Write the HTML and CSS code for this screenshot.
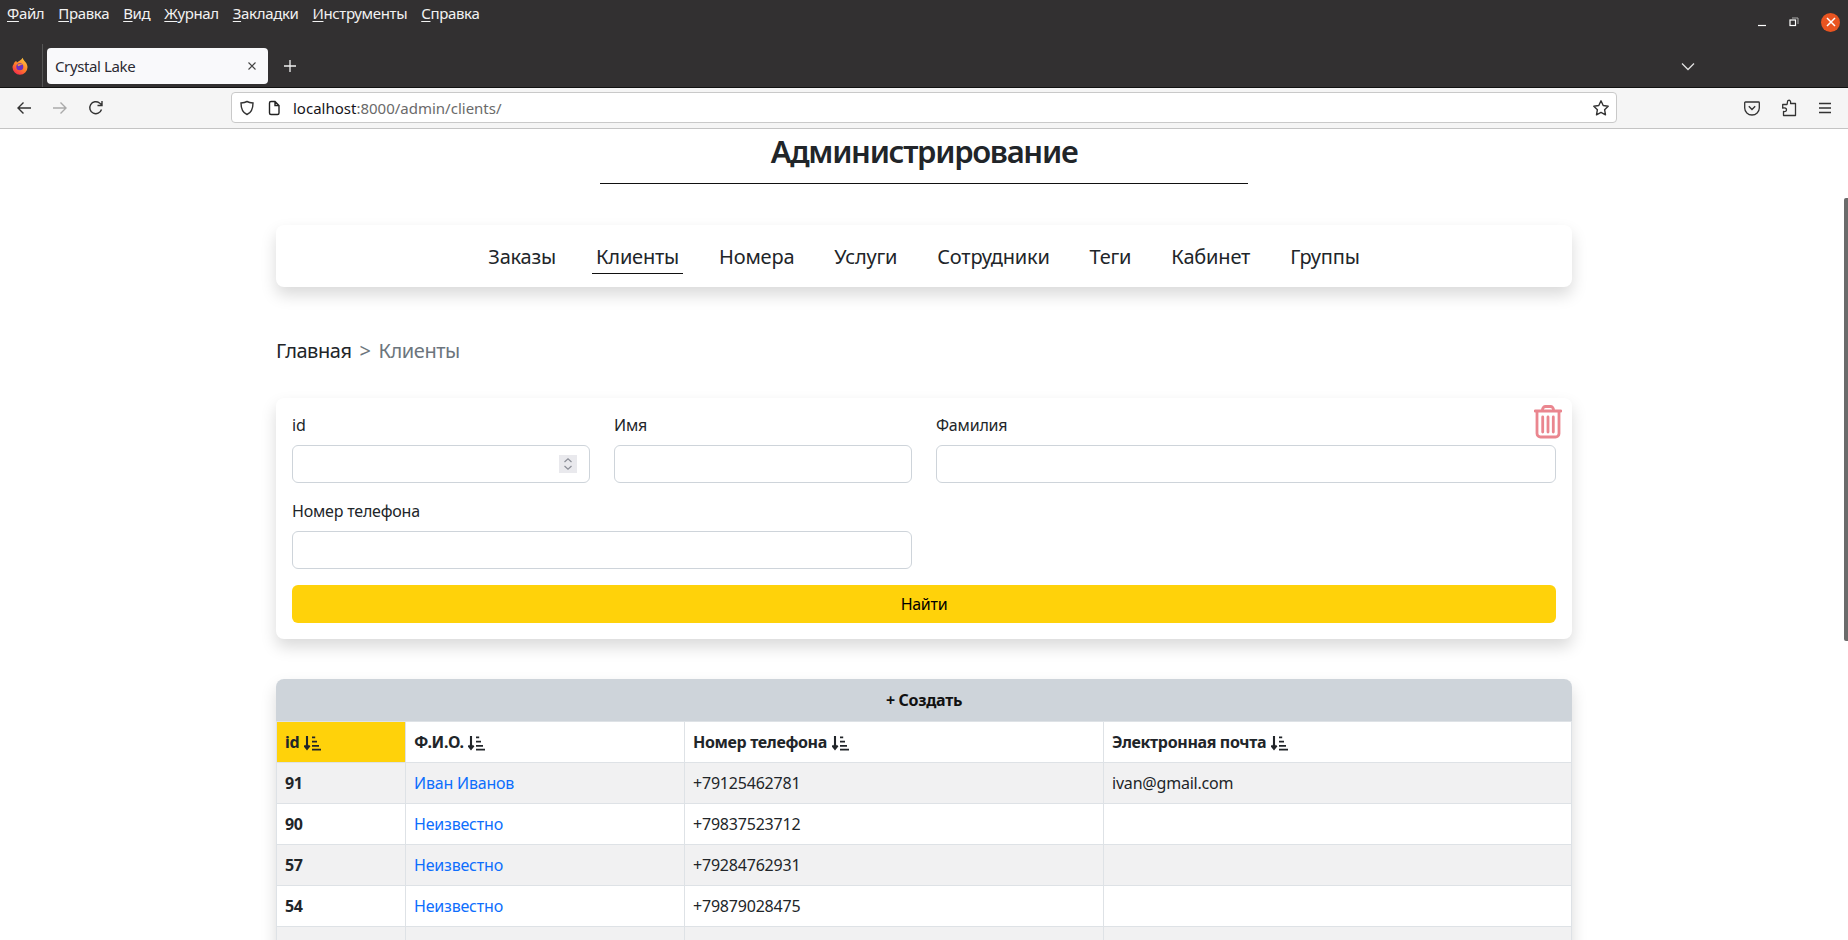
FILE: index.html
```html
<!DOCTYPE html>
<html lang="ru">
<head>
<meta charset="utf-8">
<title>Crystal Lake</title>
<link rel="stylesheet" href="styles.css">
</head>
<body>
<svg class="sprite" width="0" height="0" aria-hidden="true">
  <defs>
    <linearGradient id="fxg" x1="0.8" y1="0" x2="0.2" y2="1">
      <stop offset="0" stop-color="#ffc83d"/>
      <stop offset="0.55" stop-color="#ff7a2a"/>
      <stop offset="1" stop-color="#f5224f"/>
    </linearGradient>
  </defs>
  <symbol id="sort" viewBox="0 0 17 16">
    <path d="M3 1v12.500M.4 10.500 3 13.800l2.600-3.300" fill="none" stroke="currentColor" stroke-width="2.100"/>
    <path d="M8 1.500h3.200v1.800H8zM8 5.700h5v1.800H8zM8 9.900h7v1.800H8zM8 13.800h9v1.800H8z" fill="currentColor"/>
  </symbol>
</svg>
<header class="browser">
  <div class="titlebar">
    <nav class="menubar">
      <span><u>Ф</u>айл</span><span><u>П</u>равка</span><span><u>В</u>ид</span><span><u>Ж</u>урнал</span><span><u>З</u>акладки</span><span><u>И</u>нструменты</span><span><u>С</u>правка</span>
    </nav>
    <div class="winbtns">
      <svg width="10" height="10" viewBox="0 0 10 10"><path d="M1 8.500h8" stroke="#fff" stroke-width="1.200"/></svg>
      <svg width="10" height="10" viewBox="0 0 10 10"><path d="M3 1h6v6" fill="none" stroke="#aaa"/><rect x="1" y="3" width="5.500" height="5.500" fill="none" stroke="#fff" stroke-width="1.200"/></svg>
      <span class="closebtn"><svg width="10" height="10" viewBox="0 0 10 10"><path d="M1 1l8 8M9 1l-8 8" stroke="#fff" stroke-width="1.500"/></svg></span>
    </div>
  </div>
  <div class="tabbar">
    <svg class="fxlogo" width="16" height="18" viewBox="0 0 16 18">
      <path d="M1.500 7.500C2 5.500 3 4.500 4.200 4l.8 1.500C6.500 4.500 9.500 3 10.800.8c.2 1.700 1.400 2.800 2.600 4.200 1.500 1.800 2.100 3.800 2.100 5.200a7.500 7.500 0 0 1-15 0c0-1 .3-1.800 1-2.700z" fill="url(#fxg)"/>
      <circle cx="7.800" cy="9.800" r="3.500" fill="#6a2fc0"/>
      <path d="M5.500 7.500c1.800-1 4-.8 5.300.6-1-.2-3 0-3.700 1-.8.200-1.500-.6-1.600-1.600z" fill="#ff9a2e"/>
    </svg>
    <span class="tabsep"></span>
    <div class="tab">
      <span class="tabtitle">Crystal Lake</span>
      <svg width="10" height="10" viewBox="0 0 10 10"><path d="M1.500 1.500l7 7M8.500 1.500l-7 7" stroke="#444" stroke-width="1.100"/></svg>
    </div>
    <svg class="newtab" width="14" height="14" viewBox="0 0 14 14"><path d="M7 1v12M1 7h12" stroke="#f0f0f0" stroke-width="1.300"/></svg>
    <svg class="tablist" width="14" height="9" viewBox="0 0 14 9"><path d="M1 1.500l6 6 6-6" fill="none" stroke="#e0e0e0" stroke-width="1.300"/></svg>
  </div>
  <div class="toolbar">
    <div class="navbtns">
      <svg width="16" height="16" viewBox="0 0 16 16"><path d="M15 8H2M7.500 2.500 2 8l5.500 5.500" fill="none" stroke="#333" stroke-width="1.400"/></svg>
      <svg width="16" height="16" viewBox="0 0 16 16"><path d="M1 8h13M8.500 2.500 14 8l-5.500 5.500" fill="none" stroke="#aaa" stroke-width="1.400"/></svg>
      <svg width="16" height="16" viewBox="0 0 16 16"><path d="M13.500 9.500A6 6 0 1 1 11.500 3L14 5M14 1v4.500H9.500" fill="none" stroke="#333" stroke-width="1.400"/></svg>
    </div>
    <div class="urlbar">
      <svg width="16" height="16" viewBox="0 0 16 16"><path d="M8 1.500c2 1 4 1.300 6 1.500 0 5-1 9.500-6 11.500C3 12.500 2 8 2 3c2-.2 4-.5 6-1.500z" fill="none" stroke="#333" stroke-width="1.400"/></svg>
      <svg width="16" height="16" viewBox="0 0 16 16"><path d="M3.500 3a1.500 1.500 0 0 1 1.500-1.500h4L13 5.500V13a1.500 1.500 0 0 1-1.500 1.500H5A1.500 1.500 0 0 1 3.500 13zM9 1.500V5.500h4" fill="none" stroke="#222" stroke-width="1.400"/></svg>
      <span class="url"><b>localhost</b>:8000/admin/clients/</span>
      <svg class="star" width="18" height="18" viewBox="0 0 18 18"><path d="M9 1.800l2.200 4.700 5 .7-3.600 3.500.9 5.100L9 13.400l-4.500 2.400.9-5.100L1.800 7.200l5-.7z" fill="none" stroke="#333" stroke-width="1.400" stroke-linejoin="round"/></svg>
    </div>
    <div class="toolicons">
      <svg width="16" height="16" viewBox="0 0 16 16"><path d="M1.500 2h13a.8.8 0 0 1 .8.8V8a7.300 7 0 0 1-14.600 0V2.800a.8.8 0 0 1 .8-.8z" fill="none" stroke="#333" stroke-width="1.300"/><path d="M4.800 6.200 8 9.400l3.200-3.200" fill="none" stroke="#333" stroke-width="1.400"/></svg>
      <svg width="16" height="18" viewBox="0 0 16 18"><path d="M7 1.500c2-.8 3 .8 2.600 3H14.500V16.500H2.500V12.500c2 .5 3-.5 3-1.800s-1.500-2.200-3.800-1.600V5.500H6c.5-1 .2-3.200 1-4z" fill="none" stroke="#333" stroke-width="1.300" stroke-linejoin="round"/></svg>
      <svg width="14" height="12" viewBox="0 0 14 12"><path d="M1 1.500h12M1 6h12M1 10.500h12" stroke="#333" stroke-width="1.300"/></svg>
    </div>
  </div>
</header>

<div class="viewport">
  <main class="container">
    <h1 class="page-title">Администрирование</h1>
    <hr class="title-rule">

    <nav class="card mainnav">
      <a>Заказы</a><a class="active">Клиенты</a><a>Номера</a><a>Услуги</a><a>Сотрудники</a><a>Теги</a><a>Кабинет</a><a>Группы</a>
    </nav>

    <div class="crumbs"><a>Главная</a><span class="sep">&gt;</span><span class="current">Клиенты</span></div>

    <form class="card filter">
      <svg class="trash" width="28" height="34" viewBox="0 0 28 34"><path d="M1 6h26M8.500 5.500V4.500A3 3 0 0 1 11.500 1.500h5a3 3 0 0 1 3 3v1M3 6v22.500a3.500 3.500 0 0 0 3.500 3.500h15a3.500 3.500 0 0 0 3.500-3.500V6M8.700 12v15M14 12v15M19.300 12v15" fill="none" stroke="#ea868f" stroke-width="2.800" stroke-linecap="round"/></svg>
      <div class="fields">
        <label class="field"><span>id</span>
          <span class="input num"><span class="spin"><svg width="10" height="14" viewBox="0 0 10 14"><path d="M1.500 5 5 1.800 8.500 5M1.500 9 5 12.200 8.500 9" fill="none" stroke="#8a8d96" stroke-width="1.200"/></svg></span></span>
        </label>
        <label class="field"><span>Имя</span><span class="input"></span></label>
        <label class="field wide"><span>Фамилия</span><span class="input"></span></label>
        <label class="field wide"><span>Номер телефона</span><span class="input"></span></label>
      </div>
      <button class="find" type="button">Найти</button>
    </form>

    <section class="card tablecard">
      <div class="create">+ Создать</div>
      <table>
        <colgroup><col class="c1"><col class="c2"><col class="c3"><col></colgroup>
        <thead>
          <tr>
            <th class="sorted">id <svg class="sorticon" width="17" height="16"><use href="#sort"/></svg></th>
            <th>Ф.И.О. <svg class="sorticon" width="17" height="16"><use href="#sort"/></svg></th>
            <th>Номер телефона <svg class="sorticon" width="17" height="16"><use href="#sort"/></svg></th>
            <th>Электронная почта <svg class="sorticon" width="17" height="16"><use href="#sort"/></svg></th>
          </tr>
        </thead>
        <tbody>
          <tr><th>91</th><td><a>Иван Иванов</a></td><td>+79125462781</td><td>ivan@gmail.com</td></tr>
          <tr><th>90</th><td><a>Неизвестно</a></td><td>+79837523712</td><td></td></tr>
          <tr><th>57</th><td><a>Неизвестно</a></td><td>+79284762931</td><td></td></tr>
          <tr><th>54</th><td><a>Неизвестно</a></td><td>+79879028475</td><td></td></tr>
          <tr><th>&nbsp;</th><td></td><td></td><td></td></tr>
        </tbody>
      </table>
    </section>
  </main>
  <div class="scrollthumb"></div>
</div>
</body>
</html>
```
FILE: styles.css
```css
* { box-sizing: border-box; }
html, body { margin: 0; height: 100%; overflow: hidden; }
body {
  display: flex;
  flex-direction: column;
  background: #fff;
  color: #212529;
  font-family: "Noto Sans", "Open Sans", sans-serif;
  font-size: 16px;
}
.sprite { position: absolute; }

/* browser chrome */
.browser { flex: none; }
.titlebar {
  height: 44px;
  background: #323031;
  display: flex;
  justify-content: space-between;
  color: #f2f2f2;
}
.menubar {
  display: flex;
  gap: 14px;
  padding: 4px 0 0 7px;
  font-size: 15px;
  letter-spacing: -0.35px;
  line-height: 18px;
}
.menubar u { text-underline-offset: 2px; }
.winbtns {
  display: flex;
  gap: 22px;
  align-items: center;
  height: 44px;
  padding: 0 8px 0 0;
}
.closebtn {
  width: 19px;
  height: 19px;
  border-radius: 50%;
  background: #e95420;
  display: flex;
  align-items: center;
  justify-content: center;
}
.tabbar {
  height: 44px;
  background: #323031;
  display: flex;
  align-items: center;
  border-bottom: 1px solid #111;
  padding-left: 12px;
}
.tabsep { width: 1px; height: 43px; background: #555; margin-left: 14px; }
.fxlogo { flex: none; }
.tab {
  width: 221px;
  height: 36px;
  margin: 4px 0 0 4px;
  align-self: flex-start;
  background: #f9f9fb;
  border-radius: 4px;
  display: flex;
  align-items: center;
  justify-content: space-between;
  padding: 0 11px 0 8px;
  font-size: 15px;
  letter-spacing: -0.38px;
  color: #2b2a33;
}
.newtab { margin-left: 15px; }
.tablist { margin-left: auto; margin-right: 153px; margin-top: 2px; }
.toolbar {
  height: 41px;
  background: #f5f5f5;
  border-bottom: 1px solid #c4c4c4;
  display: flex;
  align-items: center;
  padding-bottom: 1px;
}
.navbtns { display: flex; gap: 20px; width: 231px; padding-left: 16px; color: #333; }
.urlbar {
  width: 1386px;
  height: 31px;
  background: #fff;
  border: 1px solid #c9c9c9;
  border-radius: 4px;
  display: flex;
  align-items: center;
  gap: 11px;
  padding: 0 6px 0 7px;
}
.url { font-size: 15px; color: #6a6a6a; }
.url b { font-weight: 400; color: #15141a; }
.star { margin-left: auto; }
.toolicons { display: flex; gap: 21px; align-items: center; padding-left: 127px; }

/* page */
.viewport { flex: 1; min-height: 0; overflow: hidden; position: relative; }
.container { width: 1296px; margin: 0 auto; }
.scrollthumb {
  position: absolute;
  top: 69px;
  right: 0;
  width: 4px;
  height: 443px;
  background: #6b6b6b;
  border-radius: 2px 0 0 2px;
}
.page-title {
  margin: 3px 0 0;
  text-align: center;
  font-size: 31px;
  font-weight: 600;
  letter-spacing: -1.3px;
  line-height: 38px;
}
.title-rule {
  width: 648px;
  height: 1px;
  margin: 13px auto 41px;
  border: 0;
  background: #111;
}
.card {
  background: #fff;
  border-radius: 8px;
  box-shadow: 0 8px 16px rgba(0, 0, 0, .15);
}
.mainnav {
  height: 62px;
  display: flex;
  justify-content: center;
  align-items: center;
  gap: 32px;
  font-size: 20px;
  letter-spacing: -0.2px;
}
.mainnav a {
  padding: 4px 4px 2px;
  line-height: 28px;
  border-bottom: 1px solid transparent;
}
.mainnav a.active { border-bottom-color: #111; }
.crumbs {
  display: flex;
  gap: 8px;
  margin: 50px 0 33px;
  font-size: 20px;
  line-height: 28px;
  letter-spacing: -0.45px;
}
.crumbs .sep, .crumbs .current { color: #6c757d; }
.filter {
  position: relative;
  padding: 16px;
  height: 241px;
}
.trash { position: absolute; top: 7px; right: 10px; }
.fields { display: grid; grid-template-columns: repeat(4, 298px); column-gap: 24px; row-gap: 17px; }
.field { display: flex; flex-direction: column; gap: 9px; line-height: 22px; letter-spacing: -0.2px; }
.field.wide { grid-column: span 2; }
.input {
  display: flex;
  align-items: center;
  justify-content: flex-end;
  height: 38px;
  border: 1px solid #ced4da;
  border-radius: 6px;
  background: #fff;
  padding-right: 12px;
}
.spin {
  width: 18px;
  height: 18px;
  background: #e9e9ed;
  display: flex;
  align-items: center;
  justify-content: center;
}
.find {
  display: block;
  width: 100%;
  height: 38px;
  margin-top: 16px;
  border: 0;
  border-radius: 6px;
  background: #ffd20a;
  color: #000;
  font: inherit;
  letter-spacing: -0.3px;
}
.tablecard { margin-top: 40px; overflow: hidden; }
.create {
  height: 42px;
  background: #ced4da;
  text-align: center;
  font-weight: 700;
  line-height: 42px;
  letter-spacing: -0.3px;
  color: #111;
}
table { width: 100%; border-collapse: collapse; table-layout: fixed; border: 1px solid #dee2e6; border-top: 0; }
.c1 { width: 129px; }
.c2 { width: 279px; }
.c3 { width: 419px; }
th, td {
  height: 41px;
  padding: 0 8px;
  border: 1px solid #dee2e6;
  text-align: left;
  letter-spacing: -0.2px;
  font-weight: 400;
}
th { font-weight: 700; letter-spacing: -0.35px; }
th.sorted { background: #ffd20a; }
tbody tr:nth-child(odd) { background: #f1f1f2; }
td a { color: #0d6efd; }
.sorticon { vertical-align: -3px; margin-left: 1px; }
```
